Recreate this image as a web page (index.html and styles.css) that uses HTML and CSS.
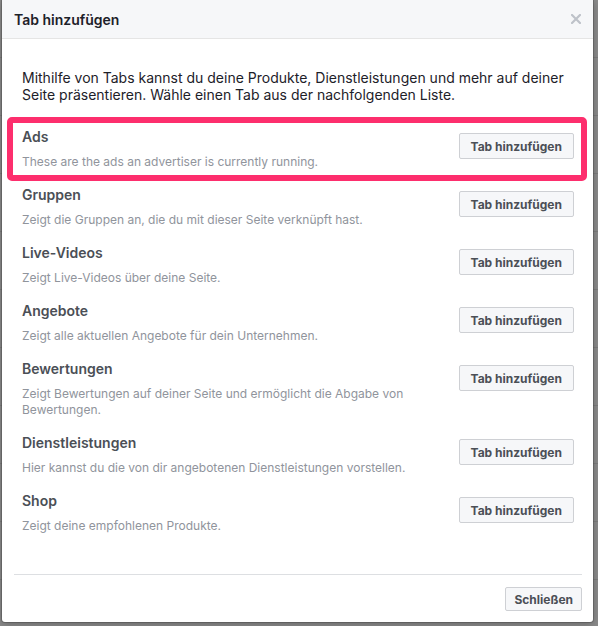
FILE: index.html
```html
<!DOCTYPE html>
<html lang="de">
<head>
<meta charset="utf-8">
<title>Tab hinzufügen</title>
<link rel="stylesheet" href="styles.css">
</head>
<body>
<div class="backdrop">
  <div class="dialog">
    <div class="header">
      <span class="title">Tab hinzufügen</span>
      <svg class="close" width="10" height="10" viewBox="0 0 10 10"><path d="M1 1L9 9M9 1L1 9" stroke="#bec2c9" stroke-width="2.2" stroke-linecap="square"/></svg>
    </div>
    <div class="content">
      <p class="intro">Mithilfe von Tabs kannst du deine Produkte, Dienstleistungen und mehr auf deiner Seite präsentieren. Wähle einen Tab aus der nachfolgenden Liste.</p>
      <div class="list">
        <div class="row highlighted">
          <div class="info"><div class="name">Ads</div><div class="desc">These are the ads an advertiser is currently running.</div></div>
          <button class="btn">Tab hinzufügen</button>
          <div class="marker"></div>
        </div>
        <div class="row">
          <div class="info"><div class="name">Gruppen</div><div class="desc">Zeigt die Gruppen an, die du mit dieser Seite verknüpft hast.</div></div>
          <button class="btn">Tab hinzufügen</button>
        </div>
        <div class="row">
          <div class="info"><div class="name">Live-Videos</div><div class="desc">Zeigt Live-Videos über deine Seite.</div></div>
          <button class="btn">Tab hinzufügen</button>
        </div>
        <div class="row">
          <div class="info"><div class="name">Angebote</div><div class="desc">Zeigt alle aktuellen Angebote für dein Unternehmen.</div></div>
          <button class="btn">Tab hinzufügen</button>
        </div>
        <div class="row">
          <div class="info"><div class="name">Bewertungen</div><div class="desc">Zeigt Bewertungen auf deiner Seite und ermöglicht die Abgabe von Bewertungen.</div></div>
          <button class="btn">Tab hinzufügen</button>
        </div>
        <div class="row">
          <div class="info"><div class="name">Dienstleistungen</div><div class="desc">Hier kannst du die von dir angebotenen Dienstleistungen vorstellen.</div></div>
          <button class="btn">Tab hinzufügen</button>
        </div>
        <div class="row">
          <div class="info"><div class="name">Shop</div><div class="desc">Zeigt deine empfohlenen Produkte.</div></div>
          <button class="btn">Tab hinzufügen</button>
        </div>
      </div>
    </div>
    <div class="footer">
      <button class="btn">Schließen</button>
    </div>
  </div>
</div>
</body>
</html>
```
FILE: styles.css
```css
html, body {
  margin: 0;
  padding: 0;
  height: 100%;
}
body {
  background: #8a8a8a;
  font-family: Inter, "Liberation Sans", Arial, sans-serif;
  overflow: hidden;
}
.backdrop {
  height: 626px;
  padding-left: 2px;
  background:
    repeating-linear-gradient(to bottom, transparent 0, transparent 57px, #7c7c7c 57px, #7c7c7c 58px);
}
.dialog {
  width: 591px;
  height: 622px;
  background: #fff;
  display: flex;
  flex-direction: column;
  box-shadow: 0 0 0 1px rgba(60, 60, 60, 0.35), 0 2px 8px rgba(0, 0, 0, 0.25);
  border-radius: 0 0 3px 3px;
}
.header {
  height: 38px;
  border-bottom: 1px solid #e5e5e5;
  background: #f6f7f9;
  display: flex;
  align-items: center;
  justify-content: space-between;
  padding: 0 12px 0 12px;
  flex: none;
}
.title {
  font-size: 14px;
  font-weight: 600;
  color: #1d2129;
}
.content {
  padding: 0 19px 0 20px;
  flex: 1;
}
.intro {
  margin: 30px 0 25px;
  font-size: 14px;
  line-height: 17px;
  color: #1d2129;
}
.list {
  display: flex;
  flex-direction: column;
  gap: 16px;
}
.row {
  display: flex;
  justify-content: space-between;
  align-items: flex-start;
  position: relative;
}
.info {
  flex: 1;
  padding-right: 30px;
}
.name {
  font-size: 14px;
  line-height: 18px;
  font-weight: 600;
  color: #4b4f56;
  margin-bottom: 8px;
}
.desc {
  font-size: 12px;
  line-height: 16px;
  color: #90949c;
}
.btn {
  flex: none;
  height: 26px;
  margin-top: 5px;
  padding: 0 11px;
  border: 1px solid #ced0d4;
  border-radius: 2px;
  background: #f6f7f9;
  font-family: inherit;
  font-size: 12px;
  font-weight: 700;
  color: #4b4f56;
}
.marker {
  position: absolute;
  left: -15px;
  right: -13px;
  top: -11px;
  bottom: -11px;
  border: 6px solid #fd2e6d;
  border-radius: 5px;
  pointer-events: none;
}
.footer {
  margin: 0 11px 0 12px;
  border-top: 1px solid #dddfe2;
  padding: 12px 0 11px;
  display: flex;
  justify-content: flex-end;
  flex: none;
}
.footer .btn {
  margin-top: 0;
  height: 24px;
  padding: 0 8px;
}
```
